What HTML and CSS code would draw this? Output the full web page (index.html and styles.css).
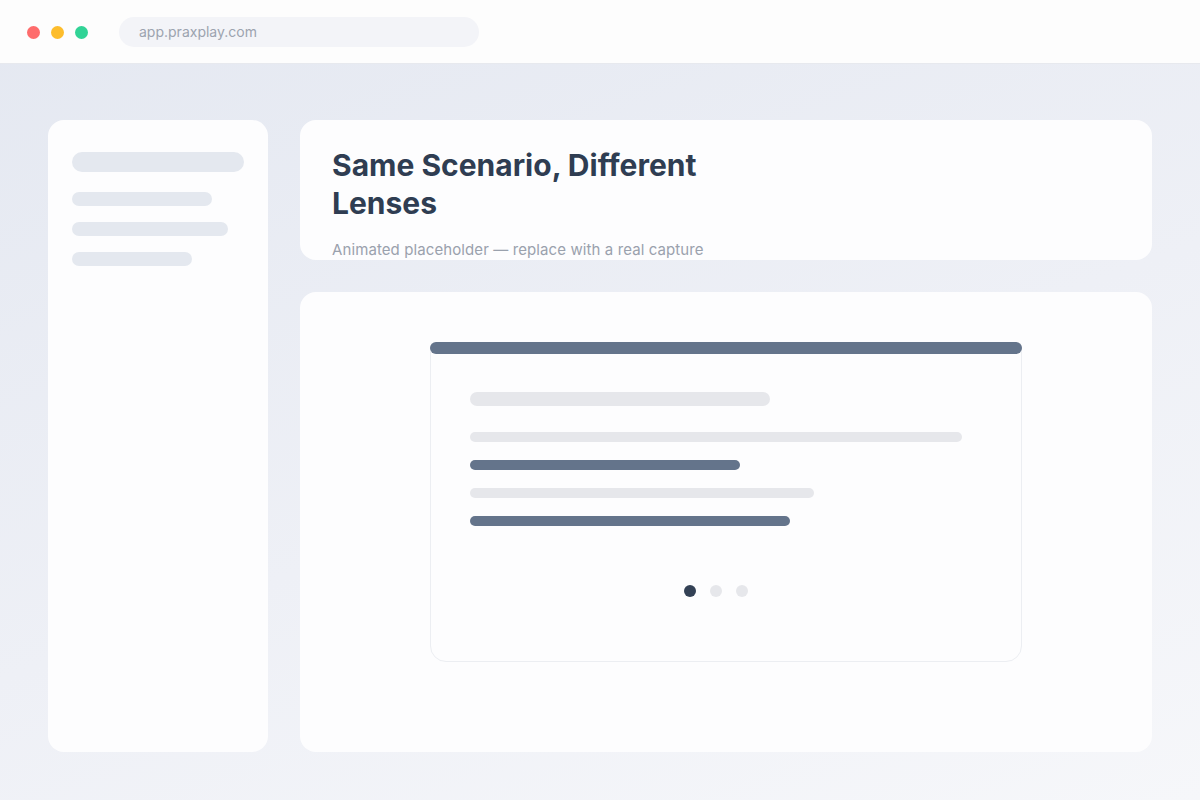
FILE: index.html
```html
<!DOCTYPE html>
<html lang="en">

<head>
    <meta charset="UTF-8">
    <meta name="viewport" content="width=device-width, initial-scale=1.0">
    <link rel="stylesheet" href="styles.css">
</head>

<body>
    <div class="topbar">
        <div class="lights">
            <span class="lamp red"></span>
            <span class="lamp yellow"></span>
            <span class="lamp green"></span>
        </div>
        <div class="url">app.praxplay.com</div>
    </div>

    <div class="page">
        <div class="sidebar">
            <div class="sk sk-head"></div>
            <div class="sk sk-item w140"></div>
            <div class="sk sk-item w156"></div>
            <div class="sk sk-item w120"></div>
        </div>

        <div class="main">
            <div class="card intro">
                <h1 class="title">Same Scenario, Different Lenses</h1>
                <p class="sub">Animated placeholder — replace with a real capture</p>
            </div>

            <div class="card stage">
                <div class="frame">
                    <div class="progress"></div>
                    <div class="frame-body">
                        <div class="line line-head"></div>
                        <div class="line light w492"></div>
                        <div class="line dark w270"></div>
                        <div class="line light w344"></div>
                        <div class="line dark w320"></div>
                    </div>
                    <div class="dots">
                        <span class="dot on"></span>
                        <span class="dot"></span>
                        <span class="dot"></span>
                    </div>
                </div>
            </div>
        </div>
    </div>
</body>

</html>
```

FILE: styles.css
```css
* {
    box-sizing: border-box;
}

body,
h1,
p {
    margin: 0;
    padding: 0;
}

body {
    width: 1200px;
    height: 800px;
    font-family: Inter, "Noto Sans", sans-serif;
    background: linear-gradient(160deg, #e4e8f1 0%, #eef0f6 55%, #f6f7fa 100%);
    overflow: hidden;
}

/* browser chrome */
.topbar {
    height: 64px;
    background: #fdfdfd;
    border-bottom: 1px solid #e7e9ee;
    display: flex;
    align-items: center;
    padding: 1px 28px 0 27px;
}

.lights {
    display: flex;
    gap: 11px;
}

.lamp {
    width: 13px;
    height: 13px;
    border-radius: 50%;
}

.red {
    background: #fe6c6c;
}

.yellow {
    background: #fdbd2c;
}

.green {
    background: #31d396;
}

.url {
    width: 360px;
    height: 30px;
    margin-left: 31px;
    border-radius: 15px;
    background: #f3f4f8;
    padding-left: 20px;
    font-size: 14px;
    line-height: 30px;
    color: #9ca3af;
}

/* page layout */
.page {
    height: 736px;
    padding: 56px 48px 48px;
    display: grid;
    grid-template-columns: 220px 1fr;
    gap: 32px;
}

.sidebar {
    background: #fdfdfe;
    border-radius: 16px;
    padding: 32px 24px;
    display: flex;
    flex-direction: column;
    gap: 16px;
}

.sk {
    background: #e4e8ef;
}

.sk-head {
    height: 20px;
    border-radius: 10px;
    margin-bottom: 4px;
}

.sk-item {
    height: 14px;
    border-radius: 7px;
}

.w140 {
    width: 140px;
}

.w156 {
    width: 156px;
}

.w120 {
    width: 120px;
}

.main {
    display: grid;
    grid-template-rows: 140px 1fr;
    gap: 32px;
}

.card {
    background: #fdfdfe;
    border-radius: 16px;
}

.intro {
    padding: 26px 32px 0;
    overflow: hidden;
}

.title {
    max-width: 420px;
    font-size: 30px;
    line-height: 38px;
    font-weight: 700;
    color: #2f3d52;
}

.sub {
    margin-top: 17px;
    font-size: 15px;
    line-height: 22px;
    letter-spacing: 0.1px;
    color: #9aa1ad;
}

/* animated mockup */
.stage {
    padding-top: 50px;
    display: flex;
    justify-content: center;
    align-items: flex-start;
}

.frame {
    width: 592px;
    height: 320px;
    border: 1px solid #eceef2;
    border-radius: 8px 8px 16px 16px;
    display: flex;
    flex-direction: column;
}

.progress {
    height: 12px;
    margin: -1px -1px 0;
    border-radius: 6px;
    background: #64748b;
}

.frame-body {
    padding: 38px 39px 0;
    display: flex;
    flex-direction: column;
    gap: 18px;
}

.line {
    height: 10px;
    border-radius: 5px;
}

.line-head {
    width: 300px;
    height: 14px;
    border-radius: 7px;
    background: #e6e7eb;
    margin-bottom: 8px;
}

.light {
    background: #e6e7eb;
}

.dark {
    background: #64748b;
}

.w492 {
    width: 492px;
}

.w270 {
    width: 270px;
}

.w344 {
    width: 344px;
}

.w320 {
    width: 320px;
}

.dots {
    margin-top: 59px;
    padding-right: 20px;
    display: flex;
    justify-content: center;
    gap: 14px;
}

.dot {
    width: 12px;
    height: 12px;
    border-radius: 50%;
    background: #e6e7eb;
}

.dot.on {
    background: #334155;
}
```
